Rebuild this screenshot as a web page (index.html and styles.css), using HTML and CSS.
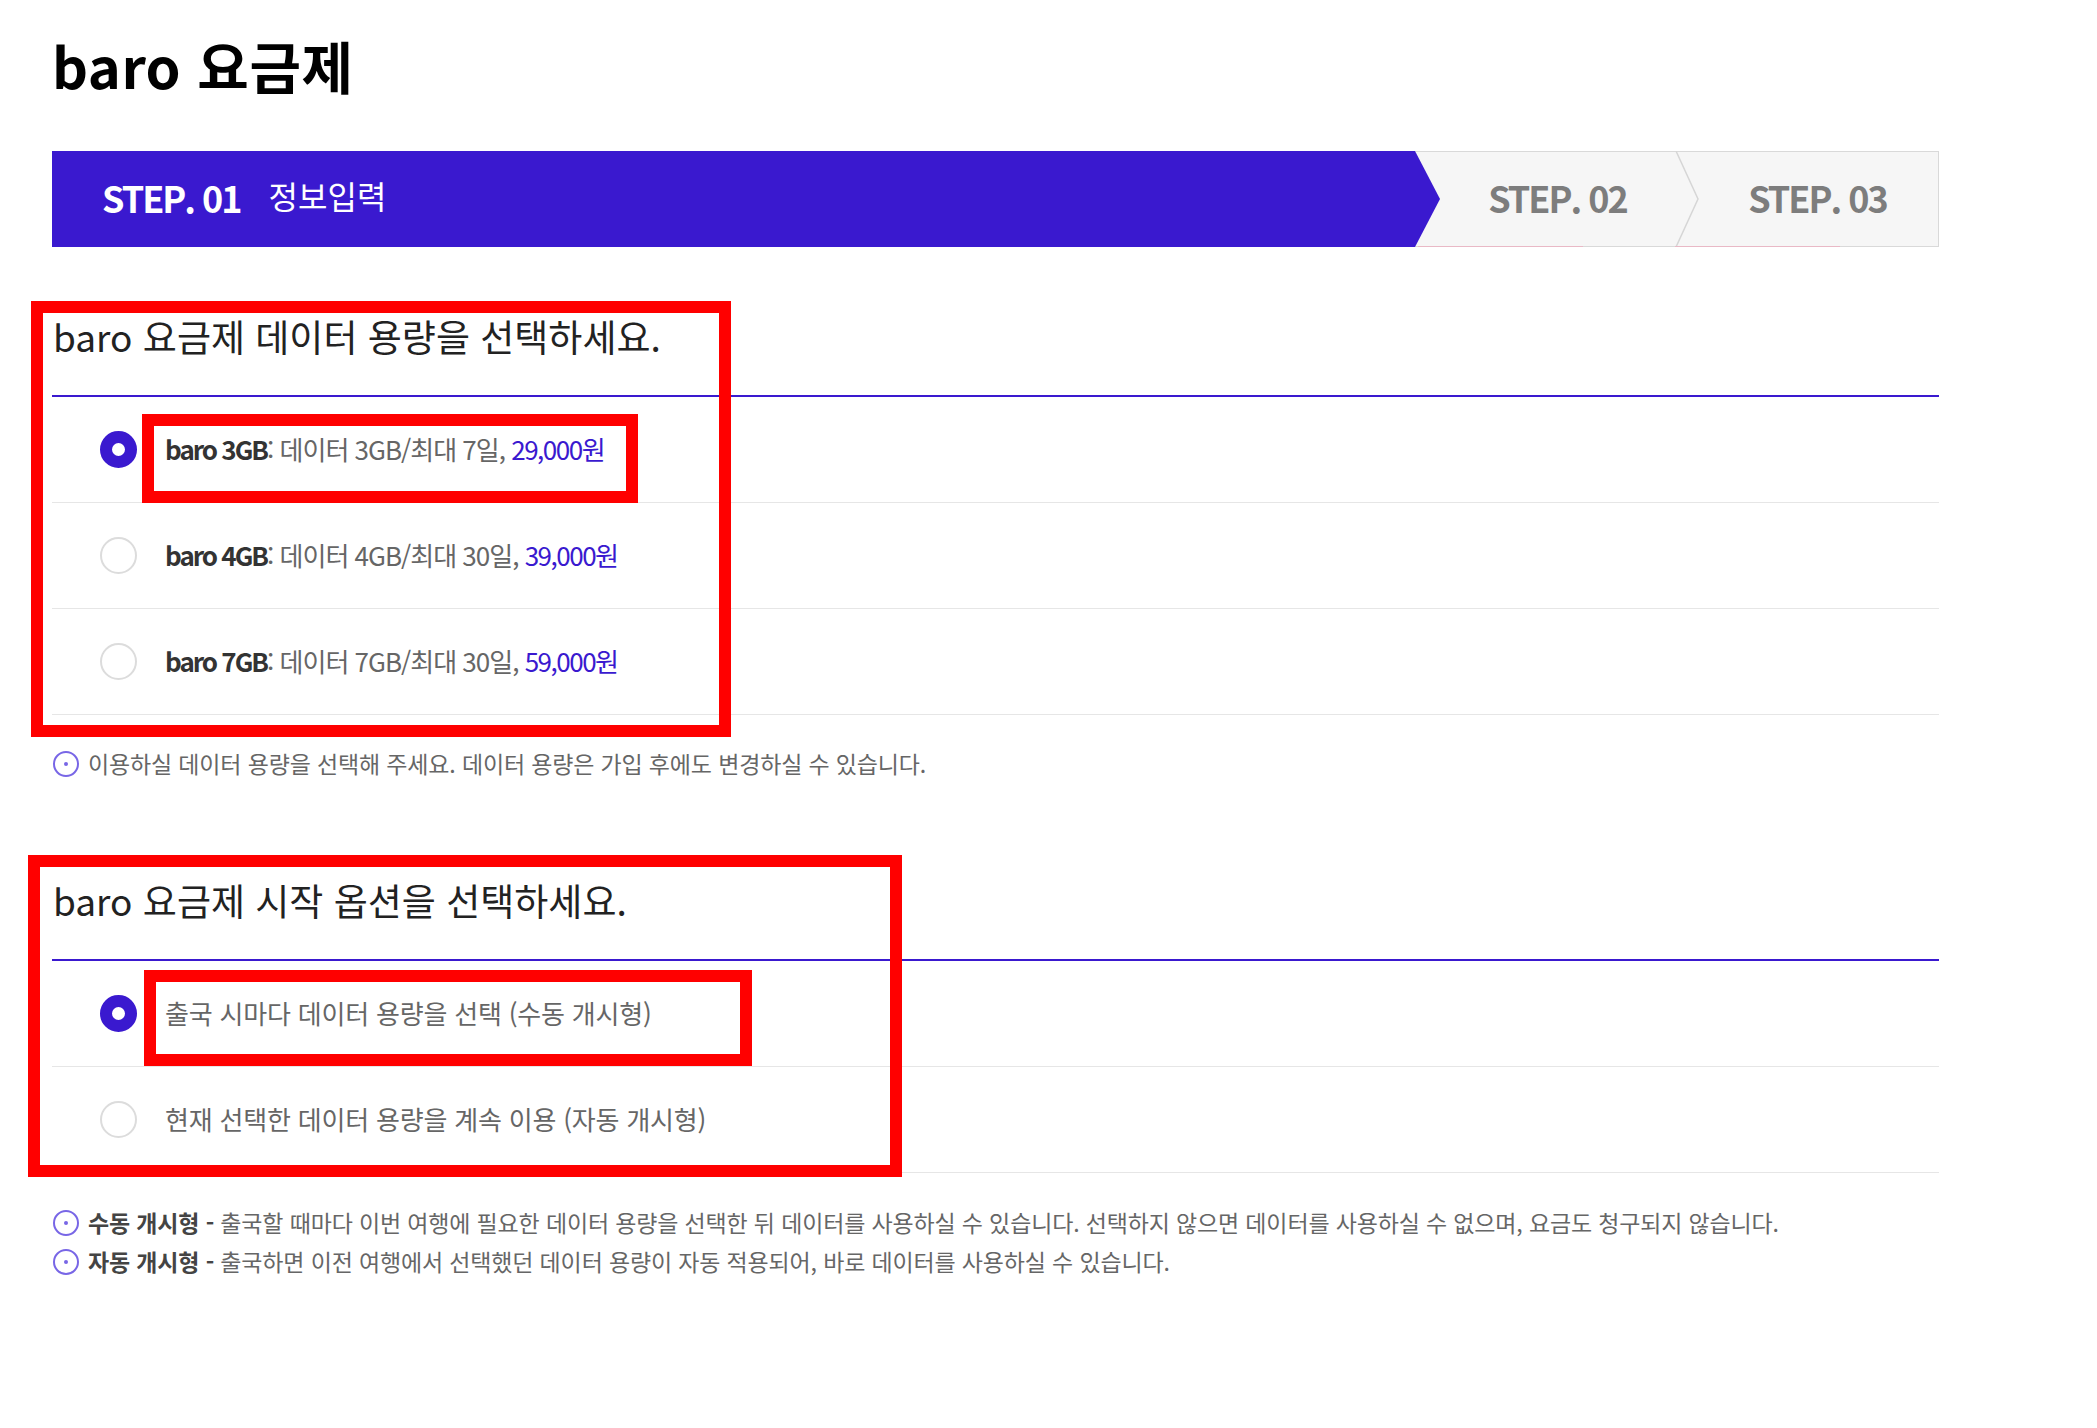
FILE: index.html
```html
<!DOCTYPE html>
<html lang="ko">
<head>
    <meta charset="UTF-8">
    <title>baro 요금제</title>
    <link rel="stylesheet" href="styles.css">
</head>
<body>
    <div class="page">
        <h1 class="title">baro 요금제</h1>

        <div class="steps">
            <div class="step step-active">
                <span class="step-no">STEP. 01</span>
                <span class="step-name">정보입력</span>
            </div>
            <div class="step step-next">
                <span class="step-no">STEP. 02</span>
            </div>
            <div class="step step-last">
                <svg class="chevron" width="26" height="96" viewBox="0 0 26 96">
                    <polyline points="1,0 23,48 1,96" fill="none" stroke="#d6d6d6" stroke-width="1.5"/>
                </svg>
                <span class="step-no">STEP. 03</span>
            </div>
        </div>

        <h2 class="section-title">baro 요금제 데이터 용량을 선택하세요.</h2>
        <div class="options">
            <div class="option">
                <span class="radio on"></span>
                <span class="label"><b class="plan">baro 3GB</b><span class="desc">: 데이터 3GB/최대 7일, </span><span class="price">29,000원</span></span>
            </div>
            <div class="option">
                <span class="radio"></span>
                <span class="label"><b class="plan">baro 4GB</b><span class="desc">: 데이터 4GB/최대 30일, </span><span class="price">39,000원</span></span>
            </div>
            <div class="option">
                <span class="radio"></span>
                <span class="label"><b class="plan">baro 7GB</b><span class="desc">: 데이터 7GB/최대 30일, </span><span class="price">59,000원</span></span>
            </div>
        </div>
        <p class="hint"><span class="info-icon"></span>이용하실 데이터 용량을 선택해 주세요. 데이터 용량은 가입 후에도 변경하실 수 있습니다.</p>

        <h2 class="section-title second">baro 요금제 시작 옵션을 선택하세요.</h2>
        <div class="options">
            <div class="option">
                <span class="radio on"></span>
                <span class="label desc wide">출국 시마다 데이터 용량을 선택 (수동 개시형)</span>
            </div>
            <div class="option">
                <span class="radio"></span>
                <span class="label desc wide">현재 선택한 데이터 용량을 계속 이용 (자동 개시형)</span>
            </div>
        </div>
        <div class="notes">
            <p class="hint note"><span class="info-icon"></span><b>수동 개시형 -</b>&nbsp;출국할 때마다 이번 여행에 필요한 데이터 용량을 선택한 뒤 데이터를 사용하실 수 있습니다. 선택하지 않으면 데이터를 사용하실 수 없으며, 요금도 청구되지 않습니다.</p>
            <p class="hint note"><span class="info-icon"></span><b>자동 개시형 -</b>&nbsp;출국하면 이전 여행에서 선택했던 데이터 용량이 자동 적용되어, 바로 데이터를 사용하실 수 있습니다.</p>
        </div>
    </div>

    <!-- red annotation boxes -->
    <div class="mark mark-step"></div>
    <div class="mark mark-sec1"></div>
    <div class="mark mark-row1"></div>
    <div class="mark mark-sec2"></div>
    <div class="mark mark-row2"></div>
</body>
</html>
```

FILE: styles.css
```css
body {
    margin: 0;
    font-family: "Noto Sans CJK KR", "Noto Sans", sans-serif;
    color: #222;
    background: #fff;
}
.page {
    width: 1887px;
    padding: 34px 0 0 52px;
}
.title {
    font-size: 56px;
    font-weight: bold;
    line-height: 62px;
    margin: 0 0 55px;
    color: #000;
    letter-spacing: 0.5px;
}

/* steps */
.steps {
    display: flex;
    height: 96px;
}
.step {
    display: flex;
    align-items: center;
    box-sizing: border-box;
    padding-bottom: 5px;
}
.step-no {
    font-size: 36px;
    font-weight: bold;
    letter-spacing: -2px;
}
.step-active {
    position: relative;
    z-index: 1;
    width: 1388px;
    padding-left: 50px;
    background: #3a19cf;
    color: #fff;
    clip-path: polygon(0 0, calc(100% - 25px) 0, 100% 50%, calc(100% - 25px) 100%, 0 100%);
}
.step-name {
    font-size: 32px;
    margin: 0 0 4px 28px;
}
.step-next,
.step-last {
    position: relative;
    background: #f6f6f6;
    border-top: 1px solid #d9d9d9;
    border-bottom: 1px solid #d9d9d9;
    color: #7d7d7d;
    justify-content: center;
}
.step-next {
    width: 260px;
    margin-left: -25px;
    padding-left: 25px;
}
.step-last {
    flex: 1;
    padding-left: 22px;
    border-right: 1px solid #d9d9d9;
}
.step-next::after,
.step-last::after {
    content: "";
    position: absolute;
    bottom: -1px;
    height: 1px;
    width: 165px;
    background: #e9b9c6;
}
.step-next::after {
    left: 3px;
}
.step-last::after {
    left: 0;
}
.chevron {
    position: absolute;
    left: 0;
    top: -1px;
}

/* sections */
.section-title {
    font-size: 37px;
    font-weight: normal;
    line-height: 44px;
    letter-spacing: 0;
    margin: 67px 0 0;
    padding: 0 0 37px 1px;
    border-bottom: 2px solid #3a19cf;
    color: #222;
}
.section-title.second {
    margin-top: 95px;
}
.option {
    display: flex;
    align-items: center;
    height: 105px;
    border-bottom: 1px solid #e6e6e6;
    padding-left: 48px;
}
.radio {
    width: 37px;
    height: 37px;
    box-sizing: border-box;
    border-radius: 50%;
    border: 2px solid #dcdcdc;
    background: #fff;
    flex-shrink: 0;
}
.radio.on {
    border: 12px solid #3a19cf;
}
.label {
    margin: 0 0 2px 28px;
    font-size: 26px;
    letter-spacing: -1px;
}
.label.wide {
    letter-spacing: -0.2px;
}
.plan {
    color: #333;
    font-weight: bold;
    letter-spacing: -2px;
}
.desc {
    color: #666;
}
.price {
    color: #3a19cf;
    letter-spacing: -1.5px;
}

/* hints */
.hint {
    display: flex;
    align-items: center;
    margin: 29px 0 0 1px;
    font-size: 23px;
    line-height: 39px;
    color: #666;
    letter-spacing: -0.15px;
}
.info-icon {
    width: 26px;
    height: 26px;
    box-sizing: border-box;
    border: 2px solid #7866e6;
    border-radius: 50%;
    margin-right: 9px;
    flex-shrink: 0;
    display: flex;
    align-items: center;
    justify-content: center;
}
.info-icon::before {
    content: "";
    width: 4px;
    height: 4px;
    border-radius: 50%;
    background: #7866e6;
}
.notes {
    margin-top: 30px;
}
.note {
    margin: 0 0 0 1px;
}
.note b {
    color: #444;
}

/* red annotation overlays */
.mark {
    position: absolute;
    box-sizing: border-box;
    border: 12px solid #ff0000;
}
.mark-step {
    left: 92px;
    top: 168px;
    width: 354px;
    height: 68px;
}
.mark-sec1 {
    left: 31px;
    top: 301px;
    width: 700px;
    height: 436px;
}
.mark-row1 {
    left: 142px;
    top: 414px;
    width: 496px;
    height: 89px;
}
.mark-sec2 {
    left: 28px;
    top: 855px;
    width: 874px;
    height: 322px;
}
.mark-row2 {
    left: 144px;
    top: 970px;
    width: 608px;
    height: 96px;
}
```
